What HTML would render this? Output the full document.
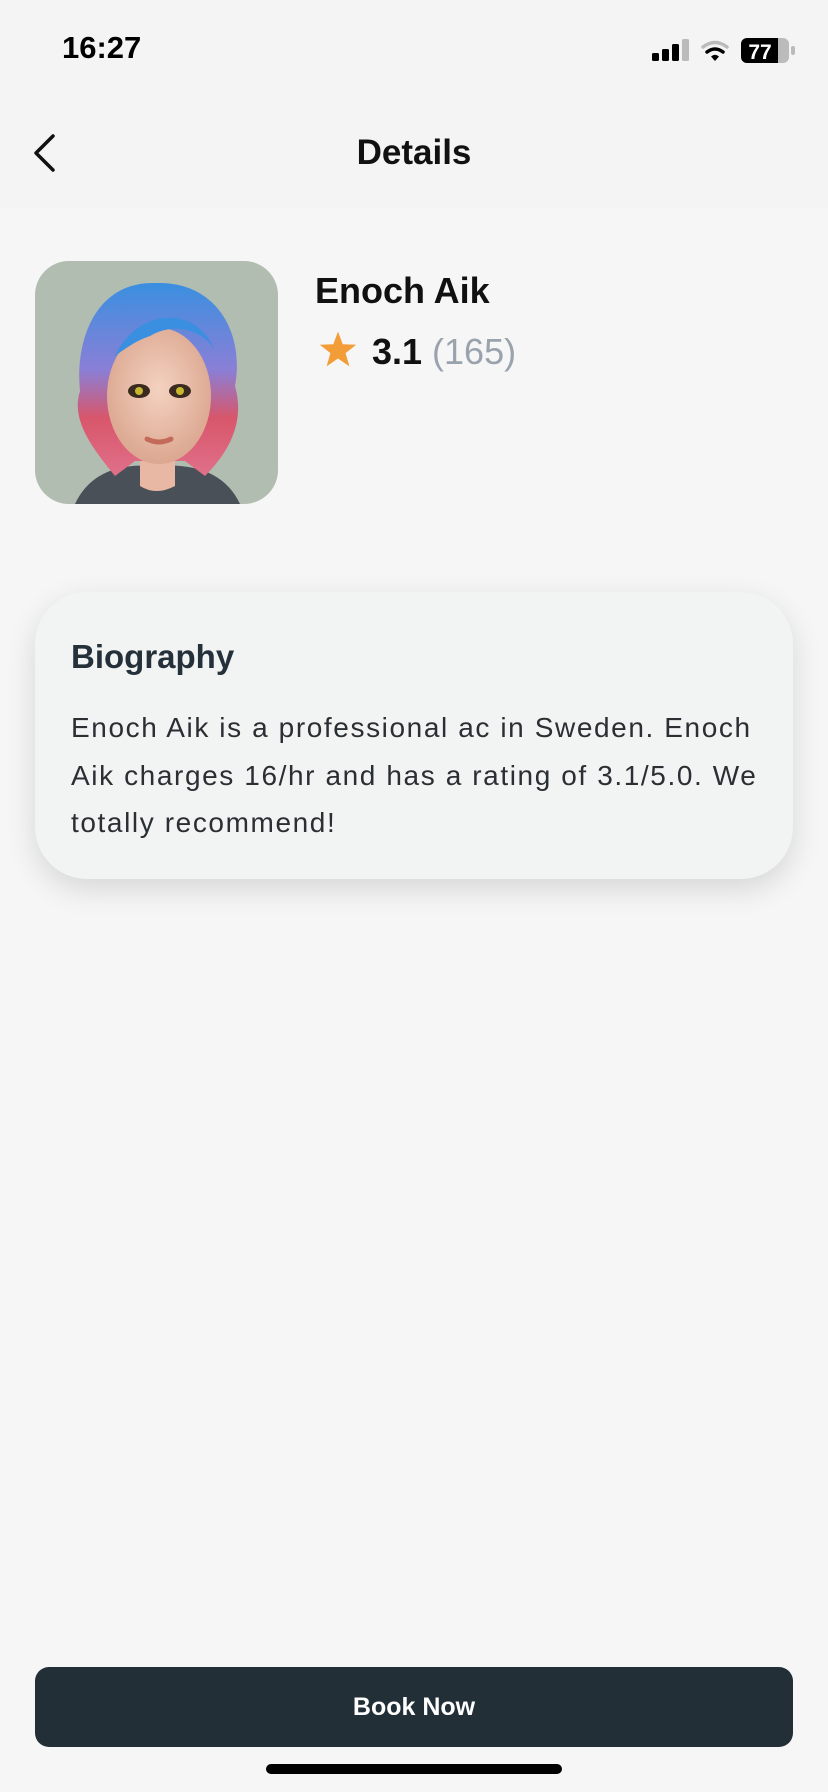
<!DOCTYPE html>
<html><head><meta charset="utf-8"><style>
*{margin:0;padding:0;box-sizing:border-box}
body{width:828px;height:1792px;background:#f5f6f5;font-family:"Liberation Sans",sans-serif;position:relative;overflow:hidden}
.hdr{position:absolute;left:0;top:0;width:828px;height:208px;background:#f3f4f3}
.abs{position:absolute}
</style></head><body>
<div class="hdr"></div>
<div class="abs" style="left:62px;top:30px;font-size:31px;font-weight:700;color:#000">16:27</div>
<svg class="abs" style="left:652px;top:38px" width="145" height="26" viewBox="0 0 145 26">
<rect x="0" y="15" width="7" height="8" rx="1.5" fill="#000"/>
<rect x="10" y="11" width="7" height="12" rx="1.5" fill="#000"/>
<rect x="20" y="6" width="7" height="17" rx="1.5" fill="#000"/>
<rect x="30" y="1" width="7" height="22" rx="1.5" fill="#bbb"/>
<path d="M51 9 Q63 0 75 9" stroke="#bbb" stroke-width="3.5" fill="none" stroke-linecap="round"/>
<path d="M55 14 Q63 8 71 14" stroke="#000" stroke-width="3.5" fill="none" stroke-linecap="round"/>
<path d="M59 18.5 L63 23 L67 18.5 Q63 15 59 18.5Z" fill="#000"/>
<rect x="89" y="0" width="48" height="25" rx="6" fill="#bbb"/>
<path d="M95 0 H126 V25 H95 A6 6 0 0 1 89 19 V6 A6 6 0 0 1 95 0Z" fill="#000"/>
<rect x="139" y="8" width="4" height="9" rx="2" fill="#bbb"/>
<text x="108" y="21" font-size="21" font-weight="700" fill="#fff" text-anchor="middle" font-family="Liberation Sans">77</text>
</svg>
<svg class="abs" style="left:30px;top:133px" width="30" height="40" viewBox="0 0 30 40"><path d="M23 3 L6 20 L23 37" stroke="#111" stroke-width="3.5" fill="none" stroke-linecap="round" stroke-linejoin="round"/></svg>
<div class="abs" style="left:0;width:828px;top:133px;text-align:center;font-size:35px;font-weight:700;color:#111">Details</div>

<svg class="abs" style="left:35px;top:261px" width="243" height="243" viewBox="0 0 243 243">
<defs>
<clipPath id="c"><rect width="243" height="243" rx="34"/></clipPath>
<linearGradient id="h" x1="0" y1="0" x2="0" y2="1"><stop offset="0" stop-color="#3a8fe0"/><stop offset=".45" stop-color="#8a7fd6"/><stop offset=".7" stop-color="#d8566a"/><stop offset="1" stop-color="#e0708a"/></linearGradient>
<radialGradient id="s" cx=".5" cy=".45" r=".6"><stop offset="0" stop-color="#f4d2c0"/><stop offset="1" stop-color="#d9a38c"/></radialGradient>
</defs>
<g clip-path="url(#c)">
<rect width="243" height="243" fill="#b1bdb1"/>
<path d="M40 243 Q60 200 121 205 Q185 200 205 243Z" fill="#4a5058"/>
<path d="M105 190 L105 225 Q121 235 140 225 L140 190Z" fill="#e8b8a5"/>
<path d="M121 22 C60 20 40 80 45 130 C35 160 60 190 80 215 L100 200 L150 200 L170 215 C195 190 210 160 200 125 C210 70 180 20 121 22Z" fill="url(#h)"/>
<ellipse cx="124" cy="135" rx="52" ry="68" fill="url(#s)"/>
<path d="M80 95 C100 50 160 40 180 90 C170 70 140 60 115 75 C100 80 90 88 80 95Z" fill="#3a8fe0"/>
<ellipse cx="104" cy="130" rx="11" ry="7" fill="#3a2a20"/><circle cx="104" cy="130" r="4" fill="#c8b830"/>
<ellipse cx="145" cy="130" rx="11" ry="7" fill="#3a2a20"/><circle cx="145" cy="130" r="4" fill="#c8b830"/>
<path d="M112 178 Q124 184 136 178" stroke="#c46a5a" stroke-width="5" fill="none" stroke-linecap="round"/>
</g></svg>

<div class="abs" style="left:315px;top:270px;font-size:36px;font-weight:700;color:#111">Enoch Aik</div>
<svg class="abs" style="left:319px;top:330px" width="38" height="38" viewBox="0 0 24 24"><path d="M12 1 L15 9 L23.5 9.3 L16.8 14.6 L19.2 23 L12 18 L4.8 23 L7.2 14.6 L0.5 9.3 L9 9Z" fill="#f29d38"/></svg>
<div class="abs" style="left:372px;top:331px;font-size:36px;font-weight:700;color:#111">3.1 <span style="color:#9aa3ad;font-weight:400">(165)</span></div>

<div class="abs" style="left:35px;top:592px;width:758px;height:287px;border-radius:52px;background:#f2f3f3;box-shadow:0 10px 30px rgba(0,0,0,.13)"></div>
<div class="abs" style="left:71px;top:638px;font-size:33px;font-weight:700;color:#25313a">Biography</div>
<div class="abs" style="left:71px;top:704px;font-size:28px;line-height:47.5px;color:#2a2f33;white-space:nowrap;letter-spacing:1.6px">Enoch Aik is a professional ac in Sweden. Enoch<br>Aik charges 16/hr and has a rating of 3.1/5.0. We<br>totally recommend!</div>

<div class="abs" style="left:35px;top:1667px;width:758px;height:80px;border-radius:14px;background:#222f37;color:#fff;font-size:25px;font-weight:700;text-align:center;line-height:80px">Book Now</div>
<div class="abs" style="left:266px;top:1764px;width:296px;height:10px;border-radius:5px;background:#000"></div>
</body></html>
